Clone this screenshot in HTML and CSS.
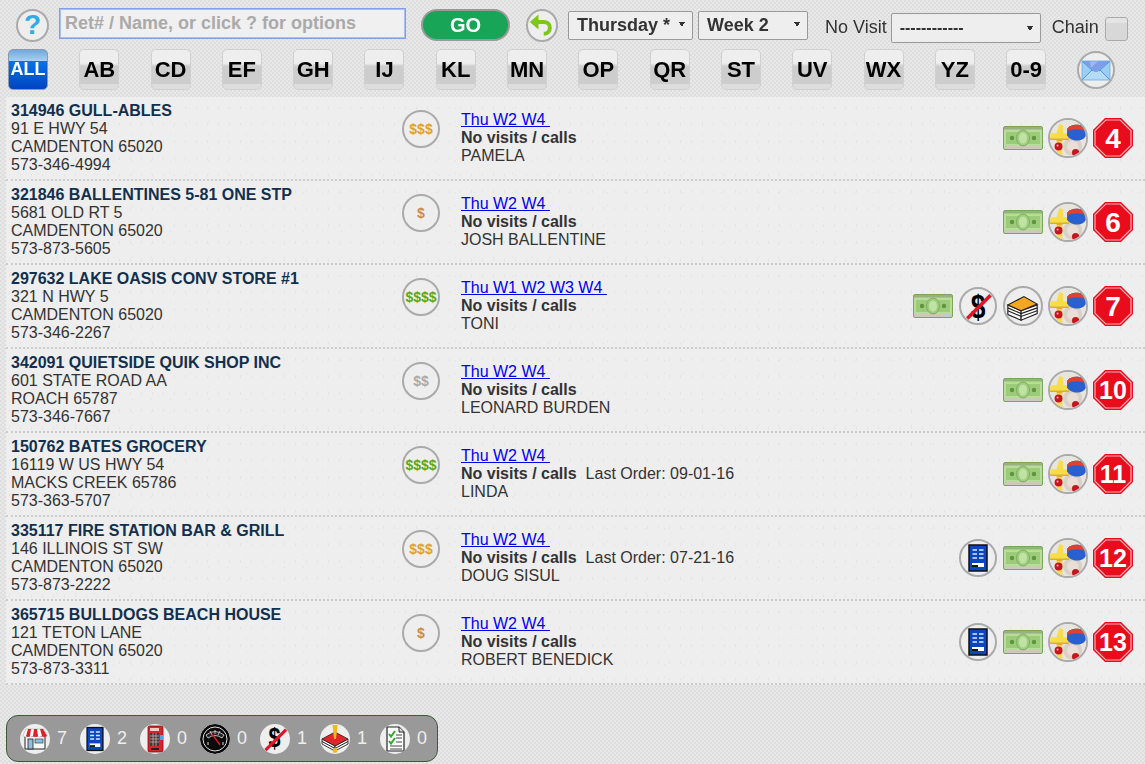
FILE: index.html
```html
<!DOCTYPE html>
<html lang="en">
<head>
    <meta charset="UTF-8">
    <meta name="viewport" content="width=device-width, initial-scale=1.0">
    <title>Retailers</title>
    <link rel="stylesheet" href="styles.css">
</head>
<body>
    <!-- Icon sprite -->
    <svg class="sprite" width="0" height="0" aria-hidden="true">
        <symbol id="i-undo" viewBox="0 0 32 32">
            <path d="M12 4 L2 12.5 L12 21 Z" fill="#7cc61e"/>
            <path d="M10 12.5 H18 C22 12.5 25 15 25 19 C25 23 22 26 18 26" fill="none" stroke="#7cc61e" stroke-width="4.5"/>
        </symbol>
        <symbol id="i-mail" viewBox="0 0 34 34">
            <rect x="3" y="8" width="28" height="19" fill="#9ccdf2"/>
            <path d="M3 8 H31 L17 20 Z" fill="#7f9ee8"/>
            <path d="M11 8 H19 L12 15 Z" fill="#a4b8f0"/>
            <path d="M3 27 L13 17 C15 20 19 20 21 17 L31 27 Z" fill="#b4dcf6"/>
            <path d="M3 8 L14 18 M31 8 L20 18 M3 27 L13 17 M31 27 L21 17" stroke="#4a94dc" stroke-width="1"/>
            <rect x="3" y="8" width="28" height="19" fill="none" stroke="#6aaae4" stroke-width=".8"/>
        </symbol>
        <symbol id="i-money" viewBox="0 0 40 24">
            <rect x="0.5" y="0.5" width="39" height="23" rx="1.5" fill="#c9cabc" stroke="#7ba65a"/>
            <path d="M1 1 H39 V3.5 H1 Z" fill="#94b478"/>
            <rect x="1" y="4" width="38" height="16" fill="#b8dd98"/>
            <rect x="3" y="6" width="34" height="12" fill="#9ccb7a"/>
            <ellipse cx="20" cy="12" rx="6.5" ry="8" fill="#a0cc80" stroke="#7fae60"/>
            <ellipse cx="20" cy="12" rx="4" ry="5.5" fill="#c0e2a4"/>
            <circle cx="9" cy="12" r="2.2" fill="#5f9440"/>
            <circle cx="31" cy="12" r="2.2" fill="#5f9440"/>
        </symbol>
        <symbol id="i-slash" viewBox="0 0 38 38">
            <path d="M7 33 L33 7" stroke="#e8112a" stroke-width="4"/>
        </symbol>
        <symbol id="i-book" viewBox="0 0 38 38">
            <path d="M3 18 L17 24 V34 L3 28 Z" fill="#fff" stroke="#222" stroke-width="1.2"/>
            <path d="M17 24 L34 18 V27 L17 34 Z" fill="#fff" stroke="#222" stroke-width="1.2"/>
            <path d="M3 21 L17 27 L34 21 M3 24 L17 30 L34 24" stroke="#222" stroke-width="1.2" fill="none"/>
            <path d="M3 18 L20 9 L34 17 L17 24 Z" fill="#f5a623" stroke="#222" stroke-width="1.2"/>
        </symbol>
        <symbol id="i-map" viewBox="0 0 38 38">
            <rect width="38" height="38" fill="#e8e4de"/>
            <circle cx="24" cy="28" r="10" fill="#d9d0c6"/>
            <circle cx="24" cy="28" r="6" fill="#e8e0d6"/>
            <path d="M7 14 L10 4 L14 6 V14 H20 V21 H13 V38 H7 V21 H0 V14 Z" fill="#f8dc4a"/>
            <path d="M0 19.5 H20 V21 H13 V22.5 H7 V21 H0 Z" fill="#d8b030"/>
            <path d="M18 10 C20 4 35 3 38 10 V16 C36 23 22 24 18 16 Z" fill="#2a5fd0"/>
            <path d="M18 10 C20 4 35 3 38 10 V12 C32 9 24 9 18 12 Z" fill="#e2402e"/>
            <circle cx="9" cy="28" r="4.2" fill="#c8141e"/>
            <circle cx="8" cy="27" r="1.2" fill="#f4a0a0"/>
            <circle cx="27" cy="34.5" r="3.8" fill="#c8141e"/>
        </symbol>
        <symbol id="i-stop" viewBox="0 0 40 40">
            <path d="M12 0 H28 L40 12 V28 L28 40 H12 L0 28 V12 Z" fill="#e80c1c"/>
            <path d="M12.8 2 H27.2 L38 12.8 V27.2 L27.2 38 H12.8 L2 27.2 V12.8 Z" fill="none" stroke="#f8b0b4" stroke-width="1.2"/>
        </symbol>
        <symbol id="i-tablet" viewBox="0 0 34 34">
            <rect x="8" y="4" width="18" height="26" fill="#0a46c0" stroke="#111" stroke-width="1.5"/>
            <path d="M11.5 9 H16 M18 9 H22.5 M11.5 13 H16 M18 13 H22.5 M11.5 17 H16 M18 17 H22.5" stroke="#dfe8ff" stroke-width="1.6"/>
            <rect x="11" y="22" width="12" height="4" fill="#fff"/>
            <rect x="11" y="24" width="6" height="2" fill="#111"/>
        </symbol>
        <symbol id="i-store" viewBox="0 0 30 30">
            <rect x="5" y="12" width="20" height="13" fill="#f8f8f8" stroke="#222"/>
            <rect x="8" y="15" width="5" height="10" fill="#8fc0e0" stroke="#222" stroke-width=".8"/>
            <rect x="15" y="15" width="8" height="4" fill="#8fc0e0" stroke="#222" stroke-width=".6"/>
            <path d="M6 5 H24 L27 12 Q24.5 14 22 12 Q19.5 14 17 12 Q15 14 13 12 Q10.5 14 8 12 Q5.5 14 3 12 Z" fill="#fff" stroke="#888" stroke-width=".4"/>
            <path d="M8 5 H11 L10 12 Q8 14 6 12 Z M14 5 H17 L18 12 Q15.5 14 13 12 Z M20 5 H23 L27 12 Q24.5 14 22 12 Z" fill="#d8232a"/>
        </symbol>
        <symbol id="i-vend" viewBox="0 0 30 30">
            <rect x="8" y="2" width="15" height="26" rx="1.5" fill="#d8232a" stroke="#7a1015" stroke-width=".8"/>
            <rect x="10" y="4" width="9" height="3" fill="#f2c8c8"/>
            <rect x="10" y="9" width="9" height="13" fill="#3a3a3a"/>
            <path d="M10 12 H19 M10 15 H19 M10 18 H19 M13 9 V22 M16 9 V22" stroke="#e8b8b8" stroke-width=".7"/>
            <rect x="20" y="11" width="3" height="5" fill="#49a8e0"/>
            <rect x="11" y="24" width="8" height="2" fill="#222"/>
        </symbol>
        <symbol id="i-gauge" viewBox="0 0 30 30">
            <circle cx="15" cy="15" r="15" fill="#0a0a0a"/>
            <circle cx="15" cy="15" r="12" fill="none" stroke="#ddd" stroke-width="1"/>
            <path d="M6 11 Q15 4 24 11 L22 14 Q15 9 8 14 Z" fill="#222" stroke="#ddd" stroke-width=".8"/>
            <path d="M10 7 L12 11 M15 6 V10 M20 7 L18 11" stroke="#ddd" stroke-width=".8"/>
            <path d="M12 10 L20 21" stroke="#e8112a" stroke-width="1.4"/>
            <path d="M8 18 V21 M23 18 V21" stroke="#ddd"/>
        </symbol>
        <symbol id="i-alertbook" viewBox="0 0 30 30">
            <path d="M2 15 L15 22 V27 L2 20 Z" fill="#fff" stroke="#222" stroke-width=".9"/>
            <path d="M15 22 L28 15 V20 L15 27 Z" fill="#fff" stroke="#222" stroke-width=".9"/>
            <path d="M2 17.5 L15 24.5 L28 17.5" stroke="#222" fill="none"/>
            <path d="M2 15 L15 8 L28 15 L15 22 Z" fill="#e2252a" stroke="#222" stroke-width=".8"/>
            <path d="M12.5 1 H17.5 L16 15 H14 Z" fill="#f2b818"/>
            <circle cx="15" cy="26.5" r="2.4" fill="#f2b818"/>
        </symbol>
        <symbol id="i-check" viewBox="0 0 30 30">
            <path d="M7 3 H19 L24 8 V27 H7 Z" fill="#fff" stroke="#222" stroke-width="1.2"/>
            <path d="M19 3 V8 H24" fill="#ddd" stroke="#222"/>
            <path d="M9 10 L11 12.5 L15 7 M9 17 L11 19.5 L15 14" fill="none" stroke="#2faa2f" stroke-width="2"/>
            <path d="M16 11 H22 M16 14 H22 M16 18 H22 M10 22 H22 M10 25 H22" stroke="#444"/>
        </symbol>
    </svg>

    <!-- Search bar -->
    <div class="toolbar">
        <a class="round help-btn" href="#">?</a>
        <input type="text" class="search" placeholder="Ret# / Name, or click ? for options" autofocus>
        <button class="go-btn">GO</button>
        <a class="round undo-btn" href="#"><svg class="icon-undo"><use href="#i-undo"/></svg></a>
        <select class="pick pick-day"><option>Thursday *</option></select>
        <select class="pick pick-week"><option>Week 2</option></select>
        <label class="no-visit">No Visit</label>
        <select class="pick pick-visit"><option>------------</option></select>
        <label class="chain">Chain</label>
        <span class="chain-box"></span>
    </div>

    <!-- Letter filter -->
    <div class="letters">
        <a class="letter active" href="#">ALL</a>
        <a class="letter" href="#">AB</a>
        <a class="letter" href="#">CD</a>
        <a class="letter" href="#">EF</a>
        <a class="letter" href="#">GH</a>
        <a class="letter" href="#">IJ</a>
        <a class="letter" href="#">KL</a>
        <a class="letter" href="#">MN</a>
        <a class="letter" href="#">OP</a>
        <a class="letter" href="#">QR</a>
        <a class="letter" href="#">ST</a>
        <a class="letter" href="#">UV</a>
        <a class="letter" href="#">WX</a>
        <a class="letter" href="#">YZ</a>
        <a class="letter" href="#">0-9</a>
        <a class="round mail-btn" href="#"><svg class="fill"><use href="#i-mail"/></svg></a>
    </div>

    <!-- Retailers -->
    <div class="list">
        <div class="row">
            <div class="info"><b>314946 GULL-ABLES</b><br>91 E HWY 54<br>CAMDENTON 65020<br>573-346-4994</div>
            <div class="grade-cell"><span class="round grade g3">$$$</span></div>
            <div class="visit"><a href="#">Thu W2 W4&nbsp;</a><br><b>No visits / calls</b><br>PAMELA</div>
            <div class="actions">
                <svg class="money"><use href="#i-money"/></svg>
                <span class="round act"><svg class="fill"><use href="#i-map"/></svg></span>
                <svg class="stop" viewBox="0 0 40 40"><use href="#i-stop"/><text x="20" y="30">4</text></svg>
            </div>
        </div>
        <div class="row">
            <div class="info"><b>321846 BALLENTINES 5-81 ONE STP</b><br>5681 OLD RT 5<br>CAMDENTON 65020<br>573-873-5605</div>
            <div class="grade-cell"><span class="round grade g1">$</span></div>
            <div class="visit"><a href="#">Thu W2 W4&nbsp;</a><br><b>No visits / calls</b><br>JOSH BALLENTINE</div>
            <div class="actions">
                <svg class="money"><use href="#i-money"/></svg>
                <span class="round act"><svg class="fill"><use href="#i-map"/></svg></span>
                <svg class="stop" viewBox="0 0 40 40"><use href="#i-stop"/><text x="20" y="30">6</text></svg>
            </div>
        </div>
        <div class="row">
            <div class="info"><b>297632 LAKE OASIS CONV STORE #1</b><br>321 N HWY 5<br>CAMDENTON 65020<br>573-346-2267</div>
            <div class="grade-cell"><span class="round grade g4">$$$$</span></div>
            <div class="visit"><a href="#">Thu W1 W2 W3 W4&nbsp;</a><br><b>No visits / calls</b><br>TONI</div>
            <div class="actions">
                <svg class="money"><use href="#i-money"/></svg>
                <span class="round act small no-pay"><span class="dollar">$</span><svg class="slash"><use href="#i-slash"/></svg></span>
                <span class="round act"><svg class="fill"><use href="#i-book"/></svg></span>
                <span class="round act"><svg class="fill"><use href="#i-map"/></svg></span>
                <svg class="stop" viewBox="0 0 40 40"><use href="#i-stop"/><text x="20" y="30">7</text></svg>
            </div>
        </div>
        <div class="row">
            <div class="info"><b>342091 QUIETSIDE QUIK SHOP INC</b><br>601 STATE ROAD AA<br>ROACH 65787<br>573-346-7667</div>
            <div class="grade-cell"><span class="round grade g2">$$</span></div>
            <div class="visit"><a href="#">Thu W2 W4&nbsp;</a><br><b>No visits / calls</b><br>LEONARD BURDEN</div>
            <div class="actions">
                <svg class="money"><use href="#i-money"/></svg>
                <span class="round act"><svg class="fill"><use href="#i-map"/></svg></span>
                <svg class="stop two" viewBox="0 0 40 40"><use href="#i-stop"/><text x="20" y="29">10</text></svg>
            </div>
        </div>
        <div class="row">
            <div class="info"><b>150762 BATES GROCERY</b><br>16119 W US HWY 54<br>MACKS CREEK 65786<br>573-363-5707</div>
            <div class="grade-cell"><span class="round grade g4">$$$$</span></div>
            <div class="visit"><a href="#">Thu W2 W4&nbsp;</a><br><b>No visits / calls</b><span class="last-order">Last Order: 09-01-16</span><br>LINDA</div>
            <div class="actions">
                <svg class="money"><use href="#i-money"/></svg>
                <span class="round act"><svg class="fill"><use href="#i-map"/></svg></span>
                <svg class="stop two" viewBox="0 0 40 40"><use href="#i-stop"/><text x="20" y="29">11</text></svg>
            </div>
        </div>
        <div class="row">
            <div class="info"><b>335117 FIRE STATION BAR &amp; GRILL</b><br>146 ILLINOIS ST SW<br>CAMDENTON 65020<br>573-873-2222</div>
            <div class="grade-cell"><span class="round grade g3">$$$</span></div>
            <div class="visit"><a href="#">Thu W2 W4&nbsp;</a><br><b>No visits / calls</b><span class="last-order">Last Order: 07-21-16</span><br>DOUG SISUL</div>
            <div class="actions">
                <span class="round act small"><svg class="fill"><use href="#i-tablet"/></svg></span>
                <svg class="money"><use href="#i-money"/></svg>
                <span class="round act"><svg class="fill"><use href="#i-map"/></svg></span>
                <svg class="stop two" viewBox="0 0 40 40"><use href="#i-stop"/><text x="20" y="29">12</text></svg>
            </div>
        </div>
        <div class="row">
            <div class="info"><b>365715 BULLDOGS BEACH HOUSE</b><br>121 TETON LANE<br>CAMDENTON 65020<br>573-873-3311</div>
            <div class="grade-cell"><span class="round grade g1">$</span></div>
            <div class="visit"><a href="#">Thu W2 W4&nbsp;</a><br><b>No visits / calls</b><br>ROBERT BENEDICK</div>
            <div class="actions">
                <span class="round act small"><svg class="fill"><use href="#i-tablet"/></svg></span>
                <svg class="money"><use href="#i-money"/></svg>
                <span class="round act"><svg class="fill"><use href="#i-map"/></svg></span>
                <svg class="stop two" viewBox="0 0 40 40"><use href="#i-stop"/><text x="20" y="29">13</text></svg>
            </div>
        </div>
    </div>

    <!-- Totals -->
    <div class="totals">
        <span class="total"><span class="disc"><svg class="fill"><use href="#i-store"/></svg></span>7</span>
        <span class="total"><span class="disc"><svg class="fill"><use href="#i-tablet"/></svg></span>2</span>
        <span class="total"><span class="disc"><svg class="fill"><use href="#i-vend"/></svg></span>0</span>
        <span class="total"><span class="disc"><svg class="fill"><use href="#i-gauge"/></svg></span>0</span>
        <span class="total"><span class="disc no-pay-disc"><span class="dollar">$</span><svg class="slash"><use href="#i-slash"/></svg></span>1</span>
        <span class="total"><span class="disc"><svg class="fill"><use href="#i-alertbook"/></svg></span>1</span>
        <span class="total"><span class="disc"><svg class="fill"><use href="#i-check"/></svg></span>0</span>
    </div>
</body>
</html>
```
FILE: styles.css
```css
body {
    font-family: "Liberation Sans", Arial, sans-serif;
    font-size: 16px;
    color: #333;
    margin: 0;
    height: 764px;
    overflow: hidden;
    background-color: #e4e4e4;
    background-image: repeating-conic-gradient(#e8e8e8 0 25%, #dedede 0 50%);
    background-size: 4px 4px;
}

.sprite {
    position: absolute;
}

.fill {
    display: block;
    width: 100%;
    height: 100%;
}

/* Round icon with the grey ring */
.round {
    display: flex;
    justify-content: center;
    align-items: center;
    box-sizing: border-box;
    border: 2px solid #aaa;
    border-radius: 50%;
    background: #eee;
    overflow: hidden;
    text-decoration: none;
    flex: none;
}

/* Toolbar */
.toolbar {
    display: flex;
    align-items: center;
    height: 34px;
    padding: 8px 0 0 16px;
}

.help-btn {
    width: 33px;
    height: 33px;
    font-size: 28px;
    font-weight: bold;
    line-height: 1;
    color: #29aee6;
}

.search {
    width: 347px;
    height: 31px;
    box-sizing: border-box;
    margin: -3px 0 0 10px;
    padding: 0 5px;
    border: 1px solid #7f9fe6;
    background: #f0f0f0;
    font-family: inherit;
    font-size: 18px;
    font-weight: bold;
    outline: 1px solid #a8c0f0;
    outline-offset: -2px;
}

.search::placeholder {
    color: #aaa;
}

.go-btn {
    width: 89px;
    height: 32px;
    margin-left: 15px;
    border: 2px solid #999;
    border-radius: 16px;
    background: #18a558;
    color: #fff;
    font-family: inherit;
    font-size: 20px;
    font-weight: bold;
}

.undo-btn {
    width: 32px;
    height: 33px;
    margin-left: 16px;
}

.icon-undo {
    width: 28px;
    height: 28px;
}

.pick {
    appearance: none;
    box-sizing: border-box;
    height: 29px;
    padding: 0 0 0 8px;
    border: 1px solid #999;
    border-radius: 2px;
    color: #333;
    font-family: inherit;
    font-size: 18px;
    font-weight: bold;
    background-color: #eee;
    background-image: linear-gradient(to top right, transparent 50%, #333 50%), linear-gradient(to top left, transparent 50%, #333 50%);
    background-size: 3px 5px;
    background-position: right 10px top 10px, right 7px top 10px;
    background-repeat: no-repeat;
}

.pick-day {
    width: 125px;
    margin-left: 10px;
}

.pick-week {
    width: 110px;
    margin-left: 5px;
}

.pick-visit {
    width: 150px;
    height: 30px;
    margin: 5px 0 0 4px;
    font-size: 16px;
    background-position: right 10px top 12px, right 7px top 12px;
}

.no-visit {
    margin: 5px 0 0 17px;
    font-size: 18px;
}

.chain {
    margin: 5px 0 0 11px;
    font-size: 18px;
}

.chain-box {
    width: 23px;
    height: 24px;
    box-sizing: border-box;
    margin: 8px 0 0 6px;
    border: 1px solid #aaa;
    border-radius: 3px;
    background: linear-gradient(#e4e4e4 25%, #d8d8d8 25%);
}

/* Letter filter */
.letters {
    display: flex;
    align-items: center;
    gap: 31.3px;
    height: 41px;
    padding: 7px 0 0 8px;
}

.letter {
    width: 40px;
    height: 41px;
    flex: none;
    box-sizing: border-box;
    border: 1px solid #d0d0d0;
    border-radius: 5px;
    background: linear-gradient(#eee 0, #eee 34%, #cdcdcd 42%, #cdcdcd 86%, #ddd 86%);
    color: #000;
    font-size: 22px;
    font-weight: bold;
    line-height: 39px;
    text-align: center;
    text-decoration: none;
}

.letter.active {
    border-color: #8a9ab0;
    background: linear-gradient(#6fa8e0 0, #a8d0f0 28%, #0a72e8 28%, #0044c0 100%);
    color: #fff;
    font-size: 18px;
}

.mail-btn {
    width: 38px;
    height: 38px;
    border-width: 2px;
}

/* Retailer list */
.list {
    margin: 7px 0 0 6px;
}

.row {
    display: flex;
    align-items: center;
    box-sizing: border-box;
    height: 84px;
    padding: 0 12px 0 5px;
    border-bottom: 2px dotted #ccc;
    background-color: #eee;
    background-image: radial-gradient(#e0e0e0 .6px, transparent 1px), radial-gradient(#e4e4e4 .6px, transparent 1px);
    background-size: 19px 13px, 11px 17px;
    background-position: 3px 5px, 9px 2px;
    line-height: 18px;
}

.info {
    width: 391px;
    flex: none;
}

.info b {
    color: #12304e;
}

.grade-cell {
    width: 59px;
    flex: none;
    align-self: flex-start;
    margin-top: 13px;
}

.grade {
    width: 38px;
    height: 38px;
    font-size: 14px;
    font-weight: bold;
}

.g1 { color: #c88a50; }
.g2 { color: #aaa; }
.g3 { color: #e0a030; }
.g4 { color: #5aa818; }

.visit {
    flex: 1;
}

.visit a {
    color: #00e;
}

.last-order {
    margin-left: 9px;
}

.actions {
    display: flex;
    align-items: center;
    gap: 5px;
    flex: none;
}

.money {
    width: 40px;
    height: 24px;
    margin-left: 1px;
}

.act {
    width: 40px;
    height: 40px;
    background: #eee;
}

.act.small {
    width: 38px;
    height: 38px;
}

/* Dollar sign with the red slash over it */
.no-pay,
.no-pay-disc {
    position: relative;
}

.no-pay {
    margin: 0 1px;
}

.dollar {
    display: block;
    color: #000;
    font-weight: bold;
    line-height: 1;
    transform: scaleX(.8);
}

.no-pay .dollar {
    font-size: 33px;
}

.no-pay-disc {
    display: flex;
    justify-content: center;
    align-items: center;
}

.no-pay-disc .dollar {
    font-size: 27px;
}

.slash {
    position: absolute;
    top: 0;
    left: 0;
    width: 100%;
    height: 100%;
}

.stop {
    width: 40px;
    height: 40px;
}

.stop text {
    font-family: "Liberation Sans", Arial, sans-serif;
    font-size: 28px;
    font-weight: bold;
    fill: #fff;
    text-anchor: middle;
}

.stop.two text {
    font-size: 25px;
}

/* Totals */
.totals {
    display: flex;
    align-items: center;
    gap: 10px;
    box-sizing: border-box;
    width: 432px;
    height: 47px;
    margin: 30px 0 0 6px;
    padding: 0 0 0 13px;
    border: 1px solid #3a5a3a;
    border-radius: 12px;
    background: #999;
    color: #eee;
    font-size: 18px;
}

.total {
    display: flex;
    align-items: center;
    gap: 7px;
    width: 50px;
}

.disc {
    width: 30px;
    height: 30px;
    flex: none;
    border-radius: 50%;
    background: #eee;
    overflow: hidden;
}
```
